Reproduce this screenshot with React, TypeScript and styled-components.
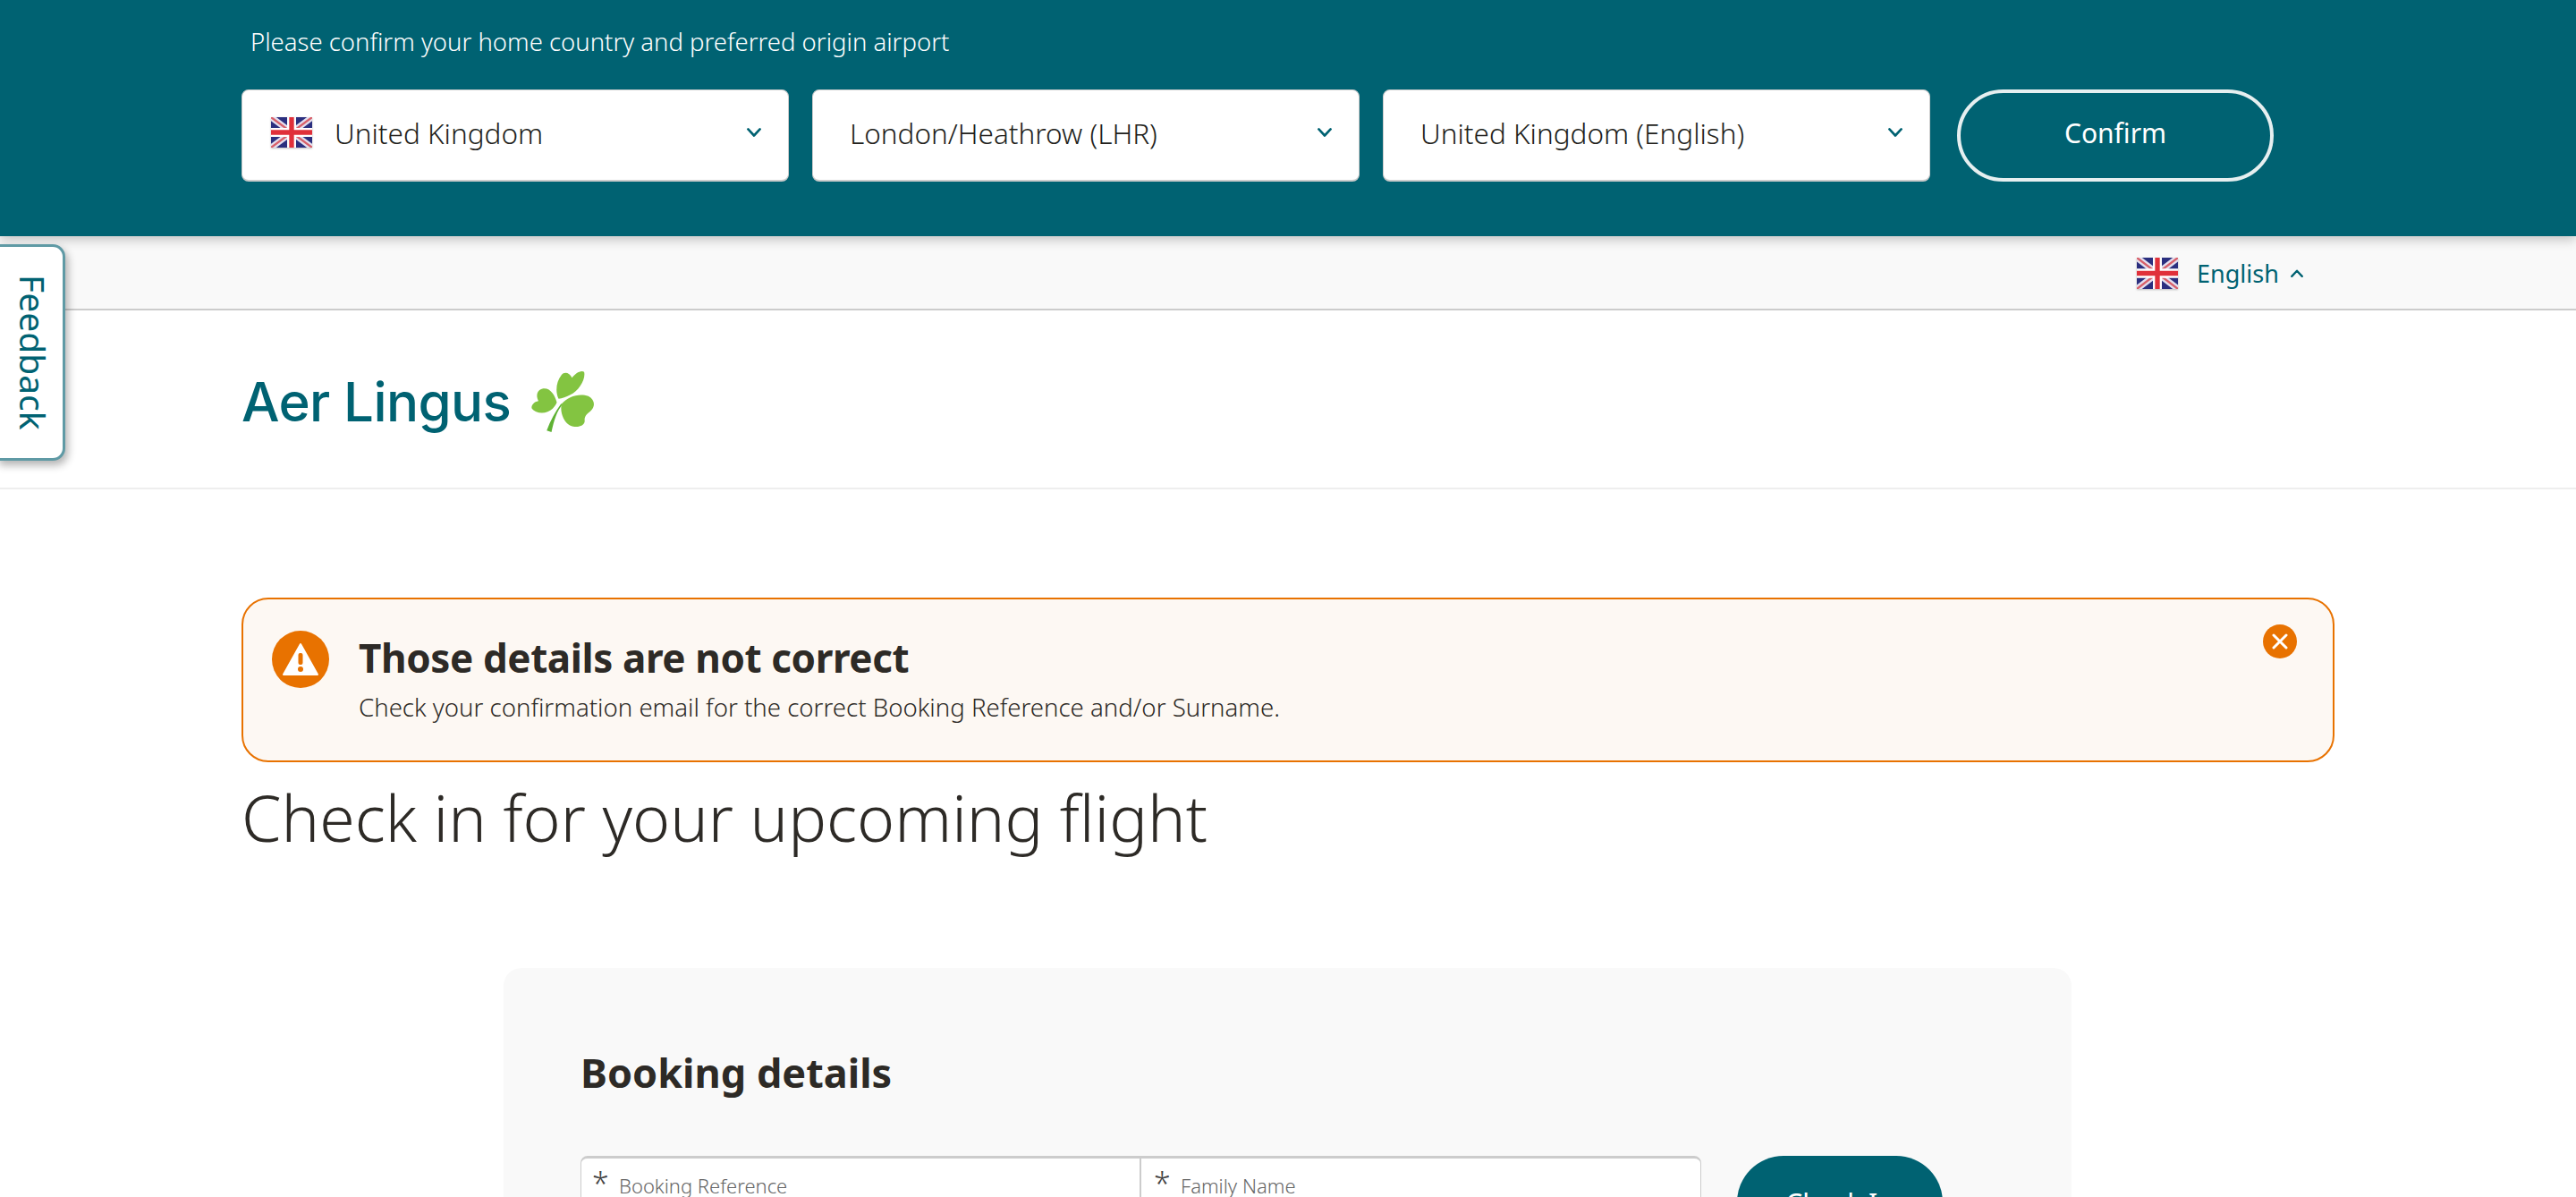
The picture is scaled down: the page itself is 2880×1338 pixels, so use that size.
import React from "react";
import styled, { createGlobalStyle } from "styled-components";

const GlobalStyle = createGlobalStyle`
  html, body {
    margin: 0;
    padding: 0;
    height: 100%;
    overflow: hidden;
    background: #fff;
  }
  * { box-sizing: border-box; }
  body {
    font-family: "Noto Sans", "Open Sans", sans-serif;
    color: #2d2a26;
  }
`;

const teal = "#006272";
const orange = "#e87200";

const Page = styled.div`
  position: relative;
  width: 2880px;
  height: 1338px;
  overflow: hidden;
`;

/* location banner */
const Banner = styled.div`
  position: relative;
  z-index: 2;
  height: 264px;
  background: ${teal};
  padding: 27px 0 0 270px;
  box-shadow: 0 4px 12px rgba(0, 0, 0, 0.22);
`;

const BannerText = styled.p`
  margin: 0 0 33px 10px;
  color: #fff;
  font-size: 27.5px;
  line-height: 40px;
  font-weight: 300;
`;

const BannerRow = styled.div`
  display: flex;
  align-items: stretch;
`;

const Select = styled.div<{ $gap?: number }>`
  width: 612px;
  height: 103px;
  margin-right: ${(p) => p.$gap ?? 26}px;
  padding: 0 30px 6px 41px;
  display: flex;
  align-items: center;
  background: #fff;
  border: 1px solid #ccc;
  border-bottom-width: 2px;
  border-radius: 8px;
  font-size: 31.5px;
  font-weight: 300;
  color: #231f1c;
`;

const SelectFlag = styled.span`
  display: flex;
  margin: 0 25px 0 -9px;
`;

const SelectText = styled.span`
  flex: 1;
`;

const Confirm = styled.button`
  width: 354px;
  height: 103px;
  padding: 0 0 6px;
  background: transparent;
  border: 4px solid #e6eff0;
  border-radius: 52px;
  color: #fff;
  font-family: inherit;
  font-size: 30px;
  font-weight: 400;
`;

/* language strip */
const LangBar = styled.div`
  height: 83px;
  background: #f9f9f9;
  border-bottom: 2px solid #ccc;
  padding: 2px 0 0 2389px;
  display: flex;
  align-items: center;
  color: ${teal};
  font-size: 27px;
  font-weight: 400;
`;

const LangName = styled.span`
  margin: 0 13px 0 21px;
`;

/* logo header */
const Header = styled.div`
  height: 200px;
  border-bottom: 2px solid #eee;
  padding: 6px 0 0 270px;
  display: flex;
  align-items: center;
`;

const LogoText = styled.span`
  font-family: Inter, "Noto Sans", sans-serif;
  font-size: 60px;
  font-weight: 500;
  letter-spacing: -0.6px;
  color: ${teal};
  margin-right: 22px;
  line-height: 1;
`;

const Feedback = styled.div`
  position: absolute;
  z-index: 3;
  left: -4px;
  top: 273px;
  width: 77px;
  height: 242px;
  padding-left: 5px;
  background: #fff;
  border: 3px solid #5f9aa5;
  border-radius: 0 14px 14px 0;
  box-shadow: 3px 5px 10px rgba(0, 0, 0, 0.3);
  display: flex;
  align-items: center;
  justify-content: center;
  writing-mode: vertical-rl;
  color: ${teal};
  font-size: 39px;
  font-weight: 400;
`;

/* main content */
const Main = styled.main`
  padding: 121px 270px 0;
`;

const Alert = styled.div`
  height: 184px;
  width: 2340px;
  display: flex;
  align-items: flex-start;
  padding: 35px 40px 0 32px;
  background: #fdf8f3;
  border: 2px solid ${orange};
  border-radius: 30px;
`;

const AlertIcon = styled.span`
  flex: none;
  width: 64px;
  height: 64px;
  border-radius: 50%;
  background: ${orange};
  display: flex;
  align-items: center;
  justify-content: center;
  margin-right: 33px;
`;

const AlertBody = styled.div`
  flex: 1;
  padding-top: 2px;
`;

const AlertTitle = styled.h2`
  margin: 0;
  font-size: 44px;
  line-height: 56px;
  font-weight: 700;
  letter-spacing: -0.4px;
`;

const AlertText = styled.p`
  margin: 7px 0 0;
  font-size: 27.6px;
  line-height: 40px;
  font-weight: 300;
`;

const AlertClose = styled.span`
  flex: none;
  width: 38px;
  height: 38px;
  margin-top: -7px;
  border-radius: 50%;
  background: ${orange};
  display: flex;
  align-items: center;
  justify-content: center;
`;

const PageTitle = styled.h1`
  margin: 14px 0 0;
  font-size: 71.5px;
  line-height: 96px;
  font-weight: 300;
`;

const Card = styled.section`
  width: 1753px;
  height: 400px;
  margin: 120px 0 0 293px;
  padding: 79px 86px 0;
  background: #f9f9f9;
  border-radius: 20px;
`;

const CardTitle = styled.h2`
  margin: 0 0 55px;
  font-size: 45px;
  line-height: 76px;
  font-weight: 700;
`;

const FormRow = styled.div`
  display: flex;
  align-items: flex-start;
`;

const Fields = styled.div`
  width: 1253px;
  height: 104px;
  display: flex;
  background: #fff;
  border: 1px solid #ccc;
  border-top-width: 3px;
  border-radius: 8px;
`;

const Field = styled.div<{ $width: number; $divider?: boolean; $inset: number }>`
  width: ${(p) => p.$width}px;
  padding: 10px 0 0 ${(p) => p.$inset}px;
  display: flex;
  align-items: flex-start;
  border-right: ${(p) => (p.$divider ? "2px solid #ccc" : "none")};
  color: #666;
`;

const Star = styled.span`
  font-size: 34px;
  line-height: 36px;
  width: 30px;
  font-weight: 300;
  color: #444;
`;

const FieldLabel = styled.span`
  font-size: 22px;
  line-height: 40px;
  font-weight: 300;
`;

const CheckIn = styled.button`
  width: 230px;
  height: 104px;
  margin-left: 40px;
  padding: 0;
  background: ${teal};
  border: none;
  border-radius: 52px;
  color: #fff;
  font-family: inherit;
  font-size: 30px;
`;

const Chevron = ({ up, width = 16 }: { up?: boolean; width?: number }) => (
  <svg width={width} height={width * 0.65} viewBox="0 0 17 11" fill="none">
    <polyline
      points={up ? "1.5,9.5 8.5,2 15.5,9.5" : "1.5,1.5 8.5,9 15.5,1.5"}
      stroke={teal}
      strokeWidth="2.8"
      strokeLinecap="round"
      strokeLinejoin="round"
    />
  </svg>
);

const Flag = ({ width, height }: { width: number; height: number }) => (
  <svg
    width={width}
    height={height}
    viewBox="0 0 60 44"
    preserveAspectRatio="none"
    style={{ filter: "drop-shadow(0 1px 1px rgba(0,0,0,.25))" }}
  >
    <rect width="60" height="44" fill="#2b2f7f" />
    <path d="M0 0L60 44M60 0L0 44" stroke="#e4dfee" strokeWidth="9" />
    <path d="M0 0L60 44M60 0L0 44" stroke="#d8606a" strokeWidth="3" />
    <path d="M30 0V44M0 22H60" stroke="#fff" strokeWidth="13" />
    <path d="M30 0V44M0 22H60" stroke="#e0303a" strokeWidth="7" />
  </svg>
);

const Shamrock = () => (
  <svg width="73" height="72" viewBox="995 45 220 215">
    <path
      d="M1098 160C1080 185 1062 215 1050 250L1066 255C1074 215 1084 185 1104 160Z"
      fill="#5fb234"
    />
    <g fill="#83c441">
      <path d="M1090 143C1078 118 1082 85 1100 62C1110 50 1128 56 1135 72C1145 58 1165 44 1176 52C1182 75 1160 115 1128 130C1116 136 1102 142 1090 143Z" />
      <path d="M1084 155C1078 130 1062 105 1038 108C1018 112 1012 130 1022 150C1008 152 996 165 1000 176C1014 194 1050 196 1070 176C1076 170 1082 162 1084 155Z" />
      <path d="M1100 160C1120 136 1160 122 1190 134C1212 146 1216 168 1196 186C1184 194 1176 204 1178 218C1176 236 1150 242 1128 232C1106 220 1094 186 1100 160Z" />
    </g>
  </svg>
);

const App: React.FC = () => {
  return (
    <Page>
      <GlobalStyle />
      <Banner>
        <BannerText>Please confirm your home country and preferred origin airport</BannerText>
        <BannerRow>
          <Select>
            <SelectFlag>
              <Flag width={46} height={34} />
            </SelectFlag>
            <SelectText>United Kingdom</SelectText>
            <Chevron />
          </Select>
          <Select>
            <SelectText>London/Heathrow (LHR)</SelectText>
            <Chevron />
          </Select>
          <Select $gap={30}>
            <SelectText>United Kingdom (English)</SelectText>
            <Chevron />
          </Select>
          <Confirm>Confirm</Confirm>
        </BannerRow>
      </Banner>
      <LangBar>
        <Flag width={46} height={35} />
        <LangName>English</LangName>
        <Chevron up width={14} />
      </LangBar>
      <Feedback>Feedback</Feedback>
      <Header>
        <LogoText>Aer Lingus</LogoText>
        <Shamrock />
      </Header>
      <Main>
        <Alert>
          <AlertIcon>
            <svg width="42" height="38" viewBox="0 0 42 38">
              <path d="M21 2L40 36H2Z" fill="#fff" stroke="#fff" strokeWidth="2" strokeLinejoin="round" />
              <rect x="18.5" y="12" width="5" height="13" rx="2" fill={orange} />
              <circle cx="21" cy="30" r="3" fill={orange} />
            </svg>
          </AlertIcon>
          <AlertBody>
            <AlertTitle>Those details are not correct</AlertTitle>
            <AlertText>
              Check your confirmation email for the correct Booking Reference and/or Surname.
            </AlertText>
          </AlertBody>
          <AlertClose>
            <svg width="18" height="18" viewBox="0 0 18 18">
              <path d="M2 2L16 16M16 2L2 16" stroke="#fff" strokeWidth="3" strokeLinecap="round" />
            </svg>
          </AlertClose>
        </Alert>
        <PageTitle>Check in for your upcoming flight</PageTitle>
        <Card>
          <CardTitle>Booking details</CardTitle>
          <FormRow>
            <Fields>
              <Field $width={626} $inset={12} $divider>
                <Star>*</Star>
                <FieldLabel>Booking Reference</FieldLabel>
              </Field>
              <Field $width={625} $inset={14}>
                <Star>*</Star>
                <FieldLabel>Family Name</FieldLabel>
              </Field>
            </Fields>
            <CheckIn>Check In</CheckIn>
          </FormRow>
        </Card>
      </Main>
    </Page>
  );
};

export default App;
